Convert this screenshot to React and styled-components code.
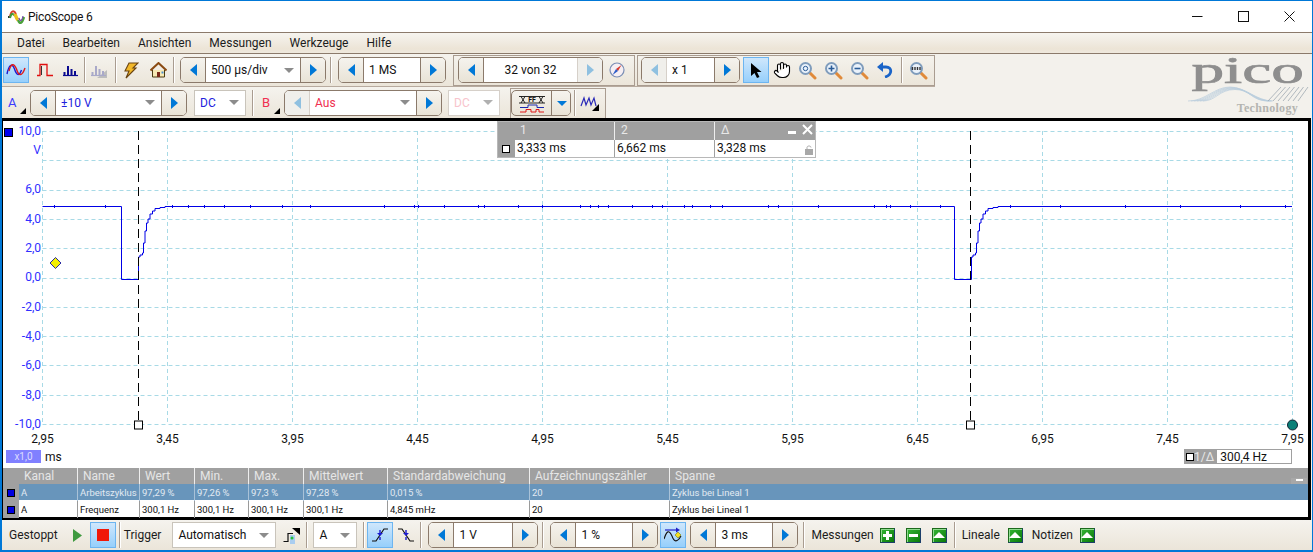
import React from "react";
import styled, { createGlobalStyle } from "styled-components";
import { Hand } from "lucide-react";

const GlobalStyle = createGlobalStyle`
  html, body {
    margin: 0;
    padding: 0;
    background: #fff;
    overflow: hidden;
  }
  body {
    font-family: Roboto, "Liberation Sans", sans-serif;
    font-size: 12px;
    color: #111;
  }
`;

const Window = styled.div`
  box-sizing: border-box;
  width: 1313px;
  height: 552px;
  display: flex;
  flex-direction: column;
  background: #f3f1ec;
  border: solid #0078d7;
  border-width: 1px 1px 2px 2px;
`;

const TitleBar = styled.div`
  height: 31px;
  flex: none;
  background: #fff;
  display: flex;
  align-items: center;
  padding-left: 6px;
  font-size: 12px;
  letter-spacing: -0.2px;
  color: #111;
`;

const TitleText = styled.span`
  margin-left: 2px;
  flex: 1;
`;

const WinControl = styled.span`
  width: 46px;
  height: 31px;
  display: flex;
  align-items: center;
  justify-content: center;
`;

const MenuBar = styled.div`
  height: 20px;
  flex: none;
  display: flex;
  align-items: center;
  padding-left: 6px;
  border-top: 1px solid #8b7a6b;
  border-bottom: 1px solid #8b7a6b;
  background: linear-gradient(#f6f4ef, #ece4d6 80%, #efe9de);
`;

const MenuItem = styled.span`
  padding: 0 9px;
  color: #1c1c1c;
`;

const ToolArea = styled.div`
  display: flex;
  flex: none;
  height: 64px;
`;

const ToolRows = styled.div`
  flex: 1;
  display: flex;
  flex-direction: column;
`;

const ToolRow = styled.div`
  box-sizing: border-box;
  width: fit-content;
  height: ${p => p.$h}px;
  display: flex;
  align-items: center;
  padding-left: 1px;
  background: linear-gradient(#f5f3ee, #ebe5d9);
  border-bottom: ${p => (p.$line ? "1px solid #b7aa9e" : "none")};
`;

const Logo = styled.div`
  width: 128px;
  flex: none;
  display: flex;
  flex-direction: column;
  align-items: center;
`;

const LogoWord = styled.div`
  font-family: "Liberation Serif", serif;
  font-size: 38px;
  line-height: 38px;
  height: 38px;
  margin: -3px 0 -3px;
  color: #8e8e8e;
  transform: scaleX(1.72);
  -webkit-text-stroke: 0.7px #8e8e8e;
`;

const LogoSub = styled.div`
  font-family: "Liberation Serif", serif;
  font-size: 12px;
  font-weight: 700;
  letter-spacing: 0.3px;
  color: #b4b4b0;
  align-self: flex-end;
  margin-right: 14px;
  line-height: 12px;
`;

const Sep = styled.span`
  width: 1px;
  height: ${p => p.$h || 26}px;
  flex: none;
  background: #a99c90;
  box-shadow: 1px 0 0 #fff;
  margin-left: ${p => p.$ml || 0}px;
`;

const IconBtn = styled.span`
  box-sizing: border-box;
  width: ${p => p.$w || 26}px;
  height: 26px;
  flex: none;
  display: flex;
  align-items: center;
  justify-content: center;
  margin-left: ${p => p.$ml || 0}px;
  ${p => p.$on && `
    border: 1px solid #6db5f0;
    background: linear-gradient(#cfe7fc, #96cffb);
  `}
`;

const SpinBox = styled.span`
  box-sizing: border-box;
  width: ${p => p.$w}px;
  height: 26px;
  flex: none;
  margin-left: ${p => p.$ml || 0}px;
  display: flex;
  border: 1.5px solid ${p => (p.$soft ? "#b9aea4" : "#8b7a6b")};
  border-radius: 5px;
  overflow: hidden;
  background: ${p => (p.$tool ? "linear-gradient(#f5f3ee, #e9e3d6)" : "#fff")};
`;

const SpinArrow = styled.span`
  width: ${p => p.$w || 24}px;
  flex: none;
  display: flex;
  align-items: center;
  justify-content: center;
  background: ${p => (p.$off ? "#f0efeb" : "linear-gradient(#f5f3ee, #e9e3d6)")};
  ${p => (p.$right ? "border-left" : "border-right")}: 1.5px solid ${p => (p.$off ? "#d6d0c9" : "#8b7a6b")};
`;

const Tri = styled.span`
  width: 0;
  height: 0;
  border-top: 6px solid transparent;
  border-bottom: 6px solid transparent;
  ${p => (p.$right ? "border-left" : "border-right")}: 7px solid ${p => (p.$off ? "#8fc0e0" : "#0078d7")};
`;

const FieldText = styled.span`
  flex: 1;
  display: flex;
  align-items: center;
  justify-content: ${p => (p.$center ? "center" : "flex-start")};
  padding: 0 ${p => (p.$center ? 0 : 5)}px;
  min-width: 0;
  color: ${p => p.$color || "#111"};
`;

const Caret = styled.span`
  width: 0;
  height: 0;
  flex: none;
  margin-right: ${p => p.$mr ?? 6}px;
  border-left: 5px solid transparent;
  border-right: 5px solid transparent;
  border-top: 5px solid ${p => p.$color || "#8c8c8c"};
  align-self: center;
`;

const Combo = styled.span`
  box-sizing: border-box;
  width: ${p => p.$w}px;
  height: 26px;
  flex: none;
  margin-left: ${p => p.$ml || 0}px;
  display: flex;
  background: #fff;
  border: 1px solid ${p => (p.$soft ? "#d6d0c9" : "#c9c4bb")};
`;

const ChannelLabel = styled.span`
  box-sizing: border-box;
  position: relative;
  width: 21px;
  height: 22px;
  flex: none;
  margin-left: ${p => p.$ml || 0}px;
  padding-left: 3px;
  font-size: 13px;
  line-height: 21px;
  color: ${p => p.$color};
  &::after {
    content: "";
    position: absolute;
    right: 0;
    bottom: 0;
    border-left: 6px solid transparent;
    border-bottom: 6px solid #000;
  }
`;

const GroupBox = styled.span`
  box-sizing: border-box;
  height: ${p => p.$h || 30}px;
  flex: none;
  display: flex;
  align-items: center;
  margin-left: ${p => p.$ml || 0}px;
  padding: 0 ${p => p.$pad ?? 3}px;
  border: 1px solid #a99c90;
  border-bottom-width: ${p => (p.$open ? 0 : 1)}px;
`;

const Scope = styled.div`
  flex: 1;
  margin-right: 1px;
  min-height: 0;
  position: relative;
  display: flex;
  flex-direction: column;
  background: #fff;
  border: solid #000;
  border-width: 3px 3px 3px 1px;
  box-sizing: border-box;
`;

const Plot = styled.svg`
  display: block;
  flex: none;
  font-family: Roboto, "Liberation Sans", sans-serif;
`;

const AxisFoot = styled.div`
  height: 15px;
  flex: none;
  display: flex;
  align-items: center;
  padding: 0 16px 0 3px;
`;

const ScaleChip = styled.span`
  width: 35px;
  height: 13px;
  line-height: 13px;
  text-align: center;
  background: #8080ff;
  color: #dcdcff;
  font-size: 10px;
`;

const UnitText = styled.span`
  margin-left: 4px;
  flex: 1;
`;

const RateBox = styled.span`
  box-sizing: border-box;
  width: 108px;
  height: 15px;
  display: flex;
  align-items: center;
  border: 1px solid #a0a0a0;
  background: #a0a0a0;
  color: #e8e8e8;
`;

const Marker = styled.span`
  box-sizing: border-box;
  width: 8px;
  height: 8px;
  flex: none;
  margin: 0 ${p => p.$mr ?? 1}px 0 ${p => p.$ml ?? 1}px;
  border: 1px solid #000;
  background: #fff;
`;

const RateValue = styled.span`
  flex: 1;
  margin-left: 3px;
  padding-left: 3px;
  height: 13px;
  line-height: 14px;
  background: #fff;
  color: #111;
`;

const CursorPanel = styled.div`
  position: absolute;
  left: 494px;
  top: 0;
  width: 319px;
  height: 37px;
  box-sizing: border-box;
  background: #a0a0a0;
  border: 1px solid #b8b8b8;
  font-size: 12px;
`;

const CursorRow = styled.div`
  display: grid;
  grid-template-columns: 16px 100px 100px 1fr;
  height: ${p => p.$h}px;
  align-items: stretch;
  position: relative;
`;

const CursorHead = styled.span`
  padding-left: 6px;
  line-height: 17px;
  color: #e8e8e8;
  border-left: ${p => (p.$plain ? "none" : "1px solid #eee")};
`;

const CursorCell = styled.span`
  padding-left: 2px;
  line-height: 17px;
  background: #fff;
  color: #111;
  border-left: 1px solid #a0a0a0;
  position: relative;
`;

const MarkerCell = styled.span`
  display: flex;
  align-items: center;
  justify-content: center;
`;

const PanelIcons = styled.span`
  position: absolute;
  right: 2px;
  top: 2px;
  display: flex;
  align-items: center;
  gap: 6px;
`;

const LockIcon = styled.span`
  position: absolute;
  right: 2px;
  top: 3px;
`;

const MeasureTable = styled.div`
  margin-top: 4px;
  flex: 1;
  min-height: 0;
  position: relative;
`;

const COLS = "16px 58px 62px 55px 54px 55px 84px 142px 140px 1fr";

const HeadRow = styled.div`
  display: grid;
  grid-template-columns: ${COLS};
  height: 16px;
  background: #a0a0a0;
  color: #e6e6e6;
  line-height: 17px;
`;

const HeadCell = styled.span`
  padding-left: ${p => p.$pad || 5}px;
  white-space: nowrap;
  overflow: hidden;
  border-left: ${p => (p.$plain ? "none" : "1px solid #eee")};
`;

const DataRow = styled.div`
  display: grid;
  grid-template-columns: ${COLS};
  height: 16px;
  margin-bottom: 1px;
  font-size: 9.5px;
  line-height: 17px;
  background: ${p => (p.$sel ? "#6895bb" : "#fff")};
  color: ${p => (p.$sel ? "#e2eaf2" : "#111")};
`;

const DataCell = styled.span`
  padding-left: 2px;
  white-space: nowrap;
  overflow: hidden;
  border-left: 1px solid ${p => (p.$sel ? "#a9c2d8" : "#9a9a9a")};
`;

const DotCell = styled.span`
  background: #a0a0a0;
  display: flex;
  align-items: center;
  justify-content: center;
`;

const Dot = styled.span`
  width: 6px;
  height: 6px;
  background: #0000e0;
  border: 1px solid #000;
`;

const PlainDataCell = styled.span`
  padding-left: 2px;
`;

const CollapseTab = styled.span`
  position: absolute;
  right: 1px;
  top: 10px;
  width: 16px;
  height: 6px;
  background: #a8a8a8;
  display: flex;
  justify-content: center;
  &::after {
    content: "";
    width: 7px;
    height: 2px;
    margin-top: 1px;
    background: #fff;
  }
`;

const BottomBar = styled.div`
  height: 30px;
  flex: none;
  display: flex;
  align-items: center;
  background: linear-gradient(#f5f3ee, #ebe5d9);
`;

const BarLabel = styled.span`
  flex: none;
  margin-left: ${p => p.$ml || 0}px;
  color: #1c1c1c;
`;

const PlayMark = styled.svg`
  flex: none;
  margin-left: 15px;
`;

const GreenBtn = styled.span`
  box-sizing: border-box;
  width: 15px;
  height: 15px;
  flex: none;
  margin-left: ${p => p.$ml || 0}px;
  display: flex;
  align-items: center;
  justify-content: center;
  background: linear-gradient(135deg, #35b635, #0a7a0a);
  border: 1px solid #1c6a1c;
  border-right-color: #1c3f6a;
  border-bottom-color: #1c3f6a;
  box-shadow: inset 1px 1px 0 #8fdc8f;
`;

const GreenUp = styled.span`
  width: 0;
  height: 0;
  border-left: 6px solid transparent;
  border-right: 6px solid transparent;
  border-bottom: 6px solid #fff;
`;

const GreenBar = styled.span`
  width: 9px;
  height: 3px;
  background: #fff;
  position: relative;
  ${p => p.$plus && `
    &::after {
      content: "";
      position: absolute;
      left: 3px;
      top: -3px;
      width: 3px;
      height: 9px;
      background: #fff;
    }
  `}
`;

/* icons */
const Ico = ({ w = 20, h = 16, children }) => (
  <svg width={w} height={h} viewBox={`0 0 ${w} ${h}`} fill="none">
    {children}
  </svg>
);

const AppLogo = () => (
  <svg width="18" height="16" viewBox="0 0 18 16" fill="none">
    <path d="M0 8 H2" stroke="#333" strokeWidth="2" />
    <path d="M2 8 C3 1 6 1 8 5" stroke="#d8402c" strokeWidth="2" />
    <path d="M2 9 C3 4 5 4 7 7" stroke="#3f9a3f" strokeWidth="2" />
    <path d="M7 5 C8 8 9 10 10 11" stroke="#ecc01c" strokeWidth="3.4" />
    <path d="M10 11 C12 16 14 14 16 8" stroke="#4aa03a" strokeWidth="2.4" />
    <path d="M11 9 C12 13 14 12 15 7" stroke="#7a4ab0" strokeWidth="1.2" />
  </svg>
);

const WaveIcon = () => (
  <Ico w={20} h={14}>
    <path d="M1 11 C3 1 6 0 8.5 6 C10.5 12 13 14 15.5 7" stroke="#1a1ad0" strokeWidth="1.4" />
    <path d="M3 8 C5 0 8 0 10.5 6 C12.5 13 16 14 19 5" stroke="#e01818" strokeWidth="1.4" />
  </Ico>
);

const PersistIcon = () => (
  <Ico w={18} h={14}>
    <path d="M1 12.5 H4 V1.5 H11 V12.5 H17" stroke="#e01010" strokeWidth="1.3" />
    <path d="M5.5 3 V12" stroke="#333" strokeWidth="1" />
  </Ico>
);

const BarsIcon = ({ color = "#0a0a90", shade }) => (
  <Ico w={18} h={15}>
    {shade && <path d="M7 15 L17 15 L17 7 Z" fill="#bdbdbd" />}
    <path d="M1 12.5 H16" stroke={color} strokeWidth="1.2" />
    <path d="M2.5 12 V9 M6 12 V3 M9.5 12 V6 M13 12 V8" stroke={color} strokeWidth="2" />
  </Ico>
);

const BoltIcon = () => (
  <Ico w={16} h={17}>
    <path d="M6 1 H15 L10 6 H13 L3 16 L6 9 H2 Z" fill="#f2b82a" stroke="#6a4412" strokeWidth="1.1" />
  </Ico>
);

const HomeIcon = () => (
  <Ico w={17} h={16}>
    <path d="M2.5 8 V15 H14.5 V8" fill="#f7e9b4" stroke="#4a3a10" strokeWidth="1" />
    <path d="M0.5 8.5 L8.5 1 L16.5 8.5" stroke="#8a4a12" strokeWidth="2" />
    <rect x="7" y="10" width="3" height="5" fill="#7a2a1a" />
    <rect x="11.5" y="9.5" width="2" height="2" fill="#4a8fd0" />
  </Ico>
);

const CompassIcon = () => (
  <Ico w={16} h={16}>
    <circle cx="8" cy="8" r="7" fill="#f6eef2" stroke="#7a8eb4" strokeWidth="1.2" />
    <path d="M12.5 3 L7 7 L9 9 Z" fill="#d8382c" />
    <path d="M3.5 13 L7 7 L9 9 Z" fill="#2c5cc8" />
  </Ico>
);

const PointerIcon = () => (
  <Ico w={14} h={17}>
    <path d="M2 1 V14 L5.5 11 L8 16 L10.5 15 L8 10 H12.5 Z" fill="#000" />
  </Ico>
);

const Lens = ({ children }) => (
  <Ico w={19} h={19}>
    <path d="M11.5 11.5 L17 17" stroke="#e08a3a" strokeWidth="3" strokeLinecap="round" />
    <circle cx="7.5" cy="7.5" r="5.5" fill="#eaf2fb" stroke="#7f9cbc" strokeWidth="2" />
    {children}
  </Ico>
);

const UndoIcon = () => (
  <Ico w={16} h={16}>
    <path d="M4 5 H9 C15.5 5 15.5 13 8 15" stroke="#1a64c8" strokeWidth="2.8" />
    <path d="M6 0 L0 5 L6 10 Z" fill="#1a64c8" />
  </Ico>
);

const BusIcon = () => (
  <Ico w={26} h={17}>
    <path d="M0 0.5 H26 M0 7 H26" stroke="#111" strokeWidth="0.9" />
    <path d="M2 0.5 L6 7 M6 0.5 L2 7 M20 0.5 L24 7 M24 0.5 L20 7" stroke="#111" strokeWidth="0.9" />
    <text x="13" y="6.4" fontSize="7" fontWeight="700" textAnchor="middle" fill="#111">FF</text>
    <path d="M1 11.5 H9 V9 H18 V11.5 H25" stroke="#1c2ab0" strokeWidth="1" />
    <path d="M1 16 H7 V13.5 H12 V16 H17 V13.5 H20 V16 H25" stroke="#e01818" strokeWidth="1" />
  </Ico>
);

const RandomWaveIcon = () => (
  <Ico w={20} h={16}>
    <path d="M1 11 L4 3 L6 10 L9 3 L11 10 L14 3 L16 11" stroke="#2a2ab8" strokeWidth="1.2" />
    <path d="M19 9 V16 H12 Z" fill="#000" />
  </Ico>
);

const StepIcon = () => (
  <Ico w={17} h={17}>
    <rect x="7" y="8" width="5" height="9" fill="#a9cdf0" />
    <path d="M0.5 14.5 H5 V6.5 H10" stroke="#111" strokeWidth="1.2" />
    <path d="M9 1 H17 V8 Z" fill="#000" />
    <circle cx="9" cy="11" r="1.5" fill="#23c23a" />
  </Ico>
);

const EdgeIcon = ({ falling }) => (
  <Ico w={16} h={16}>
    <g transform={falling ? "matrix(-1 0 0 1 16 0)" : undefined}>
      <path d="M0 14 H4 L12 2 H16" stroke="#111" strokeWidth="1.2" />
      <path d="M8 3 V6 M8 10 V13" stroke="#1a1ad0" strokeWidth="1.4" />
      <path d="M5 6 H11 L8 9 Z" fill="#1a1ad0" />
    </g>
  </Ico>
);

const TriggerWaveIcon = () => (
  <Ico w={18} h={17}>
    <path d="M1 3 H14" stroke="#2020c8" strokeWidth="1.2" />
    <path d="M12 0.5 L16 3 L12 5.5 Z" fill="#2020c8" />
    <path d="M0 12 C3 3 5 3 8 9 C10 15 13 16 17 9" stroke="#111" strokeWidth="1.1" />
    <path d="M14 5 L17 8 L14 11 L11 8 Z" fill="#f4e020" stroke="#7a7a10" strokeWidth="0.6" />
  </Ico>
);

const LogoWaves = () => (
  <svg width="121" height="16" viewBox="0 0 121 16" fill="none">
    <g stroke="#b9cddd" strokeWidth="0.7">
      {[0, 1, 2, 3, 4, 5].map(i => (
        <path
          key={i}
          d={`M${i * 3} 15 C${18 + i * 2} 15 ${26 + i} ${1 + i * 0.5} ${42 + i} ${1 + i * 0.5} C${58 + i} ${1 + i * 0.5} ${68 - i} 15 ${85 - i} 15`}
        />
      ))}
    </g>
    <g stroke="#9fa9b2" strokeWidth="0.8">
      {[0, 1, 2, 3, 4, 5, 6].map(i => (
        <path key={i} d={`M${80 + i * 5} 15 L${93 + i * 4.5} 1`} />
      ))}
    </g>
  </svg>
);

const SpinControl = ({ w, ml, label, color, leftOff, rightOff, soft, center, caret }) => (
  <SpinBox $w={w} $ml={ml} $soft={soft}>
    <SpinArrow $off={leftOff}>
      <Tri $off={leftOff} />
    </SpinArrow>
    <FieldText $color={color} $center={center}>{label}</FieldText>
    {caret && <Caret />}
    <SpinArrow $right $off={rightOff}>
      <Tri $right $off={rightOff} />
    </SpinArrow>
  </SpinBox>
);

const ComboBox = ({ w, ml, label, color, soft, caretColor }) => (
  <Combo $w={w} $ml={ml} $soft={soft}>
    <FieldText $color={color}>{label}</FieldText>
    <Caret $color={caretColor} />
  </Combo>
);

const Up = ({ ml }) => (
  <GreenBtn $ml={ml}>
    <GreenUp />
  </GreenBtn>
);

/* scope plot */
const PX = i => 42.5 + i * 125;
const PY = i => 130 + i * 29.3;
const AXIS_Y = [
  { i: 0, t: "10,0" },
  { i: 2, t: "6,0" },
  { i: 3, t: "4,0" },
  { i: 4, t: "2,0" },
  { i: 5, t: "0,0" },
  { i: 6, t: "-2,0" },
  { i: 7, t: "-4,0" },
  { i: 8, t: "-6,0" },
  { i: 9, t: "-8,0" },
  { i: 10, t: "-10,0" }
];
const AXIS_X = ["2,95", "3,45", "3,95", "4,45", "4,95", "5,45", "5,95", "6,45", "6,95", "7,45", "7,95"];

const RISE = [
  [138.5, 262], [138.5, 256], [140, 256], [140, 254], [142.5, 254], [142.5, 252], [143.5, 252],
  [143.5, 242], [145, 242], [145, 230], [146.5, 230], [146.5, 222], [148, 222], [148, 218],
  [150, 218], [150, 213], [152.5, 213], [152.5, 210], [155, 210], [155, 207.5], [160, 207.5],
  [160, 206.5], [165, 206.5], [165, 205.5]
];

const pulse = dx =>
  `L${121.5 + dx} 205.5 L${121.5 + dx} 278.5 L${138.5 + dx} 278.5 ` +
  RISE.map(([x, y]) => `L${x + dx} ${y}`).join(" ");

const TRACE = `M42.5 205.5 ${pulse(0)} ${pulse(833)} L1292 205.5`;

const NOISE = Array.from({ length: 34 }, (_, i) => 172.5 + ((i * 97 + i * i * 13) % 778)).concat(
  [54.5, 105.5, 1010.5, 1060.5, 1125.5, 1180.5, 1240.5, 1285.5]
);

const ScopePlot = () => (
  <Plot width="1307" height="328" viewBox="3 120 1307 328">
    <g stroke="#a8dae6" strokeWidth="1" strokeDasharray="4 3">
      {AXIS_X.map((_, i) => (
        <line key={i} x1={PX(i)} x2={PX(i)} y1="130" y2="424" />
      ))}
      {Array.from({ length: 11 }, (_, i) => (
        <line key={i} x1="42.5" x2="1292.5" y1={Math.round(PY(i)) + 0.5} y2={Math.round(PY(i)) + 0.5} />
      ))}
    </g>
    <rect x="4.5" y="127.5" width="8" height="8" fill="#0000f0" stroke="#000" />
    <g fill="#2f2fff" fontSize="12" textAnchor="end">
      {AXIS_Y.map(a => (
        <text key={a.t} x="41" y={PY(a.i) + 3.8}>{a.t}</text>
      ))}
      <text x="41" y="153">V</text>
    </g>
    <g fill="#111" fontSize="12" textAnchor="middle">
      {AXIS_X.map((t, i) => (
        <text key={t} x={PX(i)} y="442">{t}</text>
      ))}
    </g>
    <path d={TRACE} fill="none" stroke="#0000e6" strokeWidth="1" />
    <path d={NOISE.map(x => `M${x} 204 V207`).join(" ")} stroke="#0000e6" strokeWidth="1" />
    <path d="M55.5 256.5 L61 262 L55.5 267.5 L50 262 Z" fill="#f4f000" stroke="#2a2aa0" />
    {[138.5, 970.5].map(x => (
      <g key={x}>
        <line x1={x} x2={x} y1="130" y2="419" stroke="#000" strokeWidth="1" strokeDasharray="9 5" />
        <rect x={x - 4} y="420" width="8" height="8" fill="#fff" stroke="#000" />
      </g>
    ))}
    <circle cx="1292.5" cy="424" r="5" fill="#0a8078" stroke="#123" />
  </Plot>
);

const MEASURES = [
  { name: "Arbeitszyklus", val: "97,29 %", min: "97,26 %", max: "97,3 %", avg: "97,28 %", dev: "0,015 %", sel: true },
  { name: "Frequenz", val: "300,1 Hz", min: "300,1 Hz", max: "300,1 Hz", avg: "300,1 Hz", dev: "4,845 mHz" }
];

const App = () => (
  <Window>
    <GlobalStyle />
    <TitleBar>
      <AppLogo />
      <TitleText>PicoScope 6</TitleText>
      <WinControl>
        <svg width="11" height="11" viewBox="0 0 11 11"><path d="M0 5.5 H10.5" stroke="#111" /></svg>
      </WinControl>
      <WinControl>
        <svg width="11" height="11" viewBox="0 0 11 11"><rect x="0.5" y="0.5" width="10" height="10" fill="none" stroke="#111" /></svg>
      </WinControl>
      <WinControl>
        <svg width="11" height="11" viewBox="0 0 11 11"><path d="M0.5 0.5 L10.5 10.5 M10.5 0.5 L0.5 10.5" stroke="#111" /></svg>
      </WinControl>
    </TitleBar>
    <MenuBar>
      {["Datei", "Bearbeiten", "Ansichten", "Messungen", "Werkzeuge", "Hilfe"].map(m => (
        <MenuItem key={m}>{m}</MenuItem>
      ))}
    </MenuBar>
    <ToolArea>
      <ToolRows>
        <ToolRow $h={33} $line>
          <IconBtn $on><WaveIcon /></IconBtn>
          <IconBtn $ml={3}><PersistIcon /></IconBtn>
          <IconBtn><BarsIcon /></IconBtn>
          <Sep />
          <IconBtn $w={28}><BarsIcon color="#a9a9c9" shade /></IconBtn>
          <Sep $ml={2} />
          <IconBtn $w={28} $ml={1}><BoltIcon /></IconBtn>
          <IconBtn><HomeIcon /></IconBtn>
          <Sep $ml={2} />
          <SpinControl w={146} ml={6} label="500 µs/div" caret />
          <Sep $ml={4} />
          <SpinControl w={108} ml={7} label="1 MS" />
          <GroupBox $ml={7} $h={31} $pad={4}>
            <SpinControl w={145} label="32 von 32" rightOff center />
            <IconBtn $w={26} $ml={1}><CompassIcon /></IconBtn>
          </GroupBox>
          <GroupBox $ml={2} $h={31} $pad={3}>
            <SpinControl w={99} label="x 1" leftOff />
            <IconBtn $ml={3} $on><PointerIcon /></IconBtn>
            <IconBtn $w={25}><Hand size={18} color="#000" fill="#fff" strokeWidth={1.5} /></IconBtn>
            <IconBtn><Lens><circle cx="7.5" cy="7.5" r="2.2" stroke="#2a5c98" strokeWidth="1" /></Lens></IconBtn>
            <IconBtn><Lens><path d="M4.5 7.5 H10.5 M7.5 4.5 V10.5" stroke="#2a5c98" strokeWidth="1.6" /></Lens></IconBtn>
            <IconBtn><Lens><path d="M4.5 7.5 H10.5" stroke="#2a5c98" strokeWidth="1.6" /></Lens></IconBtn>
            <IconBtn><UndoIcon /></IconBtn>
            <Sep $ml={3} />
            <IconBtn $ml={3}><Lens><path d="M3.5 6 V9 M6 6 V9 M8.5 6 V9 M11 6 V9" stroke="#333" strokeWidth="1.4" /></Lens></IconBtn>
          </GroupBox>
        </ToolRow>
        <ToolRow $h={31}>
          <ChannelLabel $color="#3a3aff" $ml={2}>A</ChannelLabel>
          <SpinControl w={157} ml={4} label="±10 V" color="#2222dd" caret />
          <ComboBox w={52} ml={7} label="DC" color="#2222dd" />
          <Sep $ml={6} />
          <ChannelLabel $color="#f03050" $ml={6}>B</ChannelLabel>
          <SpinControl w={158} ml={4} label="Aus" color="#f03050" leftOff caret />
          <ComboBox w={52} ml={6} label="DC" color="#f8c4cc" soft caretColor="#b0b0b0" />
          <GroupBox $ml={10} $h={30} $pad={0} $open>
            <SpinBox $w={60} $tool>
              <IconBtn $w={39}><BusIcon /></IconBtn>
              <SpinArrow $right $w={19}><Caret $mr={0} $color="#0078d7" /></SpinArrow>
            </SpinBox>
            <Sep $ml={3} />
            <IconBtn $w={30}><RandomWaveIcon /></IconBtn>
          </GroupBox>
        </ToolRow>
      </ToolRows>
      <Logo>
        <LogoWord>pico</LogoWord>
        <LogoWaves />
        <LogoSub>Technology</LogoSub>
      </Logo>
    </ToolArea>
    <Scope>
      <ScopePlot />
      <AxisFoot>
        <ScaleChip>x1,0</ScaleChip>
        <UnitText>ms</UnitText>
        <RateBox>
          <Marker $mr={0} />
          1/Δ
          <RateValue>300,4 Hz</RateValue>
        </RateBox>
      </AxisFoot>
      <MeasureTable>
        <HeadRow>
          <HeadCell $plain />
          <HeadCell $plain>Kanal</HeadCell>
          <HeadCell>Name</HeadCell>
          <HeadCell>Wert</HeadCell>
          <HeadCell>Min.</HeadCell>
          <HeadCell>Max.</HeadCell>
          <HeadCell>Mittelwert</HeadCell>
          <HeadCell>Standardabweichung</HeadCell>
          <HeadCell>Aufzeichnungszähler</HeadCell>
          <HeadCell>Spanne</HeadCell>
        </HeadRow>
        {MEASURES.map(m => (
          <DataRow key={m.name} $sel={m.sel}>
            <DotCell><Dot /></DotCell>
            <PlainDataCell>A</PlainDataCell>
            <DataCell $sel={m.sel}>{m.name}</DataCell>
            <DataCell $sel={m.sel}>{m.val}</DataCell>
            <DataCell $sel={m.sel}>{m.min}</DataCell>
            <DataCell $sel={m.sel}>{m.max}</DataCell>
            <DataCell $sel={m.sel}>{m.avg}</DataCell>
            <DataCell $sel={m.sel}>{m.dev}</DataCell>
            <DataCell $sel={m.sel}>20</DataCell>
            <DataCell $sel={m.sel}>Zyklus bei Lineal 1</DataCell>
          </DataRow>
        ))}
        <CollapseTab />
      </MeasureTable>
      <CursorPanel>
        <CursorRow $h={18}>
          <CursorHead $plain />
          <CursorHead $plain>1</CursorHead>
          <CursorHead>2</CursorHead>
          <CursorHead>Δ</CursorHead>
          <PanelIcons>
            <svg width="8" height="8" viewBox="0 0 8 8"><rect y="5" width="8" height="3" fill="#fff" /></svg>
            <svg width="11" height="11" viewBox="0 0 11 11"><path d="M1 1 L10 10 M10 1 L1 10" stroke="#fff" strokeWidth="2" /></svg>
          </PanelIcons>
        </CursorRow>
        <CursorRow $h={16}>
          <MarkerCell><Marker /></MarkerCell>
          <CursorCell>3,333 ms</CursorCell>
          <CursorCell>6,662 ms</CursorCell>
          <CursorCell>
            3,328 ms
            <LockIcon>
              <svg width="8" height="10" viewBox="0 0 8 10"><path d="M2 4 V2.5 C2 0.5 6 0.5 6 2.5" stroke="#a8a8a8" fill="none" /><rect y="4" width="8" height="6" fill="#a8a8a8" /></svg>
            </LockIcon>
          </CursorCell>
        </CursorRow>
      </CursorPanel>
    </Scope>
    <BottomBar>
      <BarLabel $ml={7}>Gestoppt</BarLabel>
      <PlayMark width="9" height="13" viewBox="0 0 9 13"><path d="M0 0 L9 6.5 L0 13 Z" fill="#3f9a3f" /></PlayMark>
      <IconBtn $ml={8} $on>
        <svg width="12" height="12" viewBox="0 0 12 12"><rect width="12" height="12" fill="#f01808" /></svg>
      </IconBtn>
      <Sep $ml={3} />
      <BarLabel $ml={4}>Trigger</BarLabel>
      <ComboBox w={104} ml={11} label="Automatisch" />
      <IconBtn $ml={3} $w={24}><StepIcon /></IconBtn>
      <Sep $ml={3} />
      <ComboBox w={44} ml={6} label="A" />
      <Sep $ml={6} />
      <IconBtn $ml={3} $on><EdgeIcon /></IconBtn>
      <IconBtn $ml={2} $w={22}><EdgeIcon falling /></IconBtn>
      <Sep $ml={3} />
      <SpinControl w={110} ml={7} label="1 V" />
      <Sep $ml={4} />
      <SpinControl w={108} ml={7} label="1 %" />
      <IconBtn $ml={2} $on><TriggerWaveIcon /></IconBtn>
      <SpinControl w={108} ml={4} label="3 ms" />
      <Sep $ml={5} />
      <BarLabel $ml={7}>Messungen</BarLabel>
      <GreenBtn $ml={6}><GreenBar $plus /></GreenBtn>
      <GreenBtn $ml={11}><GreenBar /></GreenBtn>
      <Up ml={11} />
      <Sep $ml={7} />
      <BarLabel $ml={7}>Lineale</BarLabel>
      <Up ml={8} />
      <BarLabel $ml={9}>Notizen</BarLabel>
      <Up ml={7} />
    </BottomBar>
  </Window>
);

export default App;
